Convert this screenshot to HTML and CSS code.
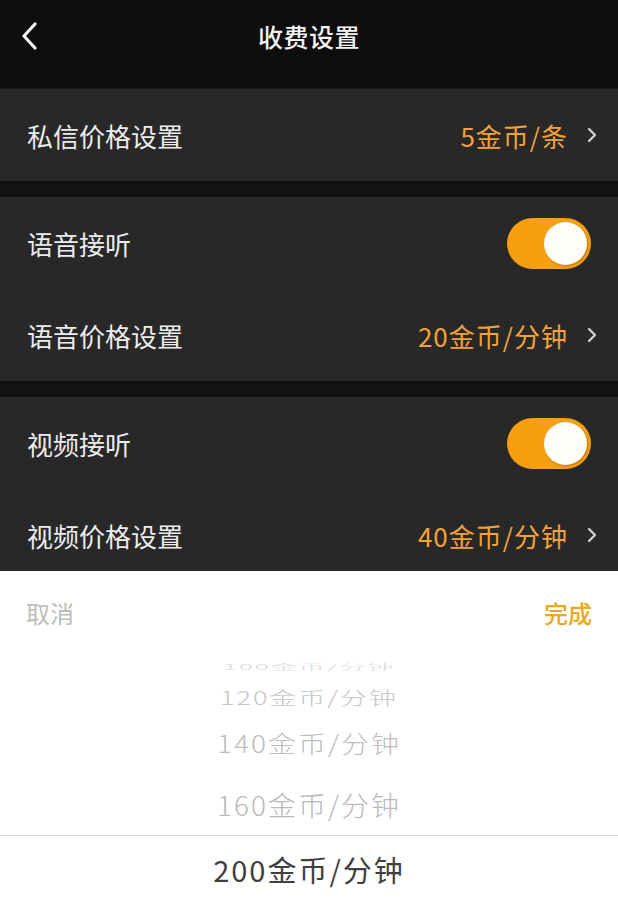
FILE: index.html
```html
<!DOCTYPE html>
<html lang="zh-CN">
<head>
<meta charset="utf-8">
<title>收费设置</title>
<link rel="stylesheet" href="styles.css">
</head>
<body>
<div class="screen">
  <header class="header">
    <div class="titlebar">
      <span class="back">
        <svg width="18" height="28" viewBox="0 0 18 28"><path d="M14 2 L3 14 L14 26" fill="none" stroke="#f2f2f2" stroke-width="3.2" stroke-linecap="round" stroke-linejoin="round"/></svg>
      </span>
      <h1 class="title">收费设置</h1>
    </div>
  </header>

  <section class="group">
    <div class="row">
      <span class="label">私信价格设置</span>
      <span class="value">5金币/条</span>
      <svg class="chev" width="12" height="18" viewBox="0 0 12 18"><path d="M3 3 L9 9 L3 15" fill="none" stroke="#cfcfcf" stroke-width="2.4" stroke-linecap="round" stroke-linejoin="round"/></svg>
    </div>
  </section>

  <section class="group">
    <div class="row">
      <span class="label">语音接听</span>
      <span class="toggle"><span class="knob"></span></span>
    </div>
    <div class="row">
      <span class="label">语音价格设置</span>
      <span class="value">20金币/分钟</span>
      <svg class="chev" width="12" height="18" viewBox="0 0 12 18"><path d="M3 3 L9 9 L3 15" fill="none" stroke="#cfcfcf" stroke-width="2.4" stroke-linecap="round" stroke-linejoin="round"/></svg>
    </div>
  </section>

  <section class="group">
    <div class="row">
      <span class="label">视频接听</span>
      <span class="toggle"><span class="knob"></span></span>
    </div>
    <div class="row">
      <span class="label">视频价格设置</span>
      <span class="value">40金币/分钟</span>
      <svg class="chev" width="12" height="18" viewBox="0 0 12 18"><path d="M3 3 L9 9 L3 15" fill="none" stroke="#cfcfcf" stroke-width="2.4" stroke-linecap="round" stroke-linejoin="round"/></svg>
    </div>
  </section>

  <div class="sheet">
    <div class="sheet-bar">
      <span class="cancel">取消</span>
      <span class="done">完成</span>
    </div>
    <div class="wheel">
      <div class="item i100"><span>100金币/分钟</span></div>
      <div class="item i120"><span>120金币/分钟</span></div>
      <div class="item i140"><span>140金币/分钟</span></div>
      <div class="item i160"><span>160金币/分钟</span></div>
      <div class="item selected"><span>200金币/分钟</span></div>
    </div>
  </div>
</div>
</body>
</html>
```

FILE: styles.css
```css
* { box-sizing: border-box; margin: 0; padding: 0; }
html, body { width: 618px; height: 904px; overflow: hidden; }
body {
  background: #121212;
  font-family: "Noto Sans CJK SC", "Noto Sans", sans-serif;
}
.screen {
  position: relative;
  width: 618px;
  height: 904px;
  display: flex;
  flex-direction: column;
  gap: 16px;
  background: #121212;
}
.header {
  height: 89px;
  background: #0e0e0e;
  border-bottom: 1px solid #1c1c1c;
  margin-bottom: -16px;
}
.titlebar {
  height: 72px;
  display: flex;
  align-items: center;
  justify-content: center;
  position: relative;
}
.back {
  position: absolute;
  left: 21px;
  top: 22px;
  display: flex;
}
.title {
  font-size: 25px;
  font-weight: 500;
  color: #f4f4f4;
  letter-spacing: 0.5px;
}
.group {
  background: #282828;
}
.row {
  height: 92px;
  display: flex;
  align-items: center;
  padding: 0 20px 0 27px;
}
.label {
  flex: 1;
  font-size: 26px;
  color: #ececec;
}
.value {
  font-size: 26px;
  letter-spacing: 1px;
  color: #f1a23a;
  margin-right: 18px;
}
.chev { display: block; }
.toggle {
  width: 84px;
  height: 51px;
  border-radius: 26px;
  background: #f79f10;
  display: flex;
  align-items: center;
  justify-content: flex-end;
  padding-right: 4px;
  margin-right: 7px;
}
.knob {
  width: 43px;
  height: 43px;
  border-radius: 50%;
  background: #fffdf8;
  box-shadow: 1px 1px 2px rgba(150, 90, 0, 0.6);
}
.sheet {
  position: absolute;
  left: 0;
  right: 0;
  bottom: 0;
  height: 333px;
  background: #ffffff;
}
.sheet-bar {
  height: 82px;
  display: flex;
  align-items: center;
  justify-content: space-between;
  padding: 0 26px 0 26px;
  font-size: 24px;
}
.cancel { color: #bcbcbc; }
.done { color: #eea623; font-weight: 500; }
.wheel {
  display: flex;
  flex-direction: column;
}
.item {
  display: flex;
  align-items: center;
  justify-content: center;
  font-size: 28px;
  letter-spacing: 2px;
  font-family: "Noto Sans CJK SC", "Noto Sans", sans-serif;
  font-weight: 300;
}
.item span { display: block; line-height: 1; }
.i100 { height: 27px; color: #d9d9d9; }
.i100 span { transform: scaleY(0.3); font-size: 26px; }
.i120 { height: 34px; color: #c6c6c6; }
.i120 span { transform: scaleY(0.68); font-size: 27px; }
.i140 { height: 58px; color: #bdbdbd; }
.i140 span { transform: scaleY(0.85); }
.i160 { height: 63px; color: #b9b9b9; }
.i160 span { transform: scaleY(0.97); }
.selected {
  height: 68px;
  border-top: 1px solid #dcdcdc;
  color: #3f3f3f;
  font-size: 29px;
  letter-spacing: 2px;
  font-weight: 400;
}
```
